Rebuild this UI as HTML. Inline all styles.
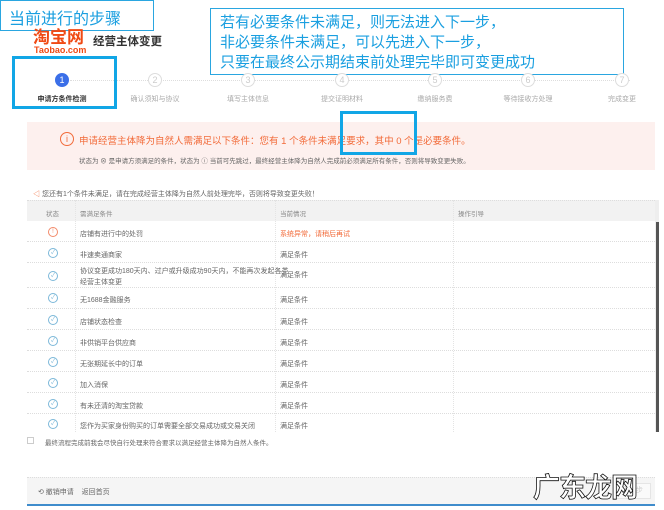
<!DOCTYPE html>
<html><head><meta charset="utf-8"><style>
*{margin:0;padding:0;box-sizing:border-box}
body{width:664px;height:510px;background:#fff;position:relative;overflow:hidden;font-family:"Liberation Sans","Noto Sans CJK SC",sans-serif;color:#555}
.a{position:absolute;white-space:nowrap}
.box{position:absolute;border:3px solid #11a6e6}
.tbox{position:absolute;border:1px solid #2aa6e0;background:#fff}
.c{position:absolute;width:14px;height:14px;border-radius:50%;border:1px solid #ddd;font-size:9px;color:#ccc;text-align:center;line-height:12px}
.lbl{position:absolute;font-size:7px;color:#aaa;top:94px;transform:translateX(-50%)}
.row{position:absolute;left:27px;width:628px;border-bottom:1px dotted #ddd;font-size:7px;color:#666}
.row span{position:absolute}
.ok{position:absolute;left:21px;width:10px;height:10px;border:1px solid #7cb8d9;border-radius:50%;font-size:6px;color:#7cb8d9;text-align:center;line-height:8px}
.vl{position:absolute;top:200px;height:232px;border-left:1px dotted #e4e4e4}
</style></head><body>
<div class="tbox" style="left:0;top:0;width:154px;height:31px"></div>
<div class="a" style="left:9px;top:5px;font-size:16px;color:#1a9fe0">当前进行的步骤</div>
<div class="a" style="left:33px;top:29px;font-size:17px;line-height:18px;font-weight:bold;color:#f04a14;letter-spacing:0">淘宝网</div>
<div class="a" style="left:34px;top:46px;font-size:9px;line-height:9px;font-weight:bold;color:#f04a14">Taobao.com</div>
<div class="a" style="left:93px;top:33px;font-size:11.5px;font-weight:bold;color:#333">经营主体变更</div>
<div class="tbox" style="left:210px;top:8px;width:414px;height:67px"></div>
<div class="a" style="left:220px;top:13px;font-size:15px;line-height:20px;color:#1a9fe0">若有必要条件未满足，则无法进入下一步，<br>非必要条件未满足，可以先进入下一步，<br>只要在最终公示期结束前处理完毕即可变更成功</div>
<div class="a" style="left:70px;top:80px;width:560px;border-top:1px dotted #ddd"></div>
<div class="c" style="left:55px;top:73px;background:#3b6fe8;border-color:#3b6fe8;color:#fff">1</div>
<div class="c" style="left:148px;top:73px;background:#fff">2</div>
<div class="c" style="left:241px;top:73px;background:#fff">3</div>
<div class="c" style="left:335px;top:73px;background:#fff">4</div>
<div class="c" style="left:428px;top:73px;background:#fff">5</div>
<div class="c" style="left:521px;top:73px;background:#fff">6</div>
<div class="c" style="left:615px;top:73px;background:#fff">7</div>
<div class="lbl" style="left:62px;color:#333;font-weight:bold">申请方条件检测</div>
<div class="lbl" style="left:155px">确认须知与协议</div>
<div class="lbl" style="left:248px">填写主体信息</div>
<div class="lbl" style="left:342px">提交证明材料</div>
<div class="lbl" style="left:435px">缴纳服务费</div>
<div class="lbl" style="left:528px">等待接收方处理</div>
<div class="lbl" style="left:622px">完成变更</div>
<div class="box" style="left:12px;top:56px;width:105px;height:53px"></div>
<div class="a" style="left:27px;top:122px;width:628px;height:48px;background:#fdf0ee"></div>
<div class="a" style="left:60px;top:132px;width:14px;height:14px;border:1px solid #f26b3a;border-radius:50%;color:#f26b3a;font-size:9px;text-align:center;line-height:12px">i</div>
<div class="a" style="left:79px;top:133px;font-size:9.5px;color:#f26b3a">申请经营主体降为自然人需满足以下条件：您有 1 个条件未满足要求，其中 0 个是必要条件。</div>
<div class="a" style="left:79px;top:155px;font-size:6.5px;color:#666">状态为 ⊗ 是申请方须满足的条件，状态为 ⓘ 当前可先跳过，最终经营主体降为自然人完成前必须满足所有条件，否则将导致变更失败。</div>
<div class="box" style="left:340px;top:111px;width:77px;height:44px"></div>
<div class="a" style="left:33px;top:189px;font-size:7px;color:#666"><span style="color:#f26b3a">◁</span> 您还有1个条件未满足，请在完成经营主体降为自然人前处理完毕，否则将导致变更失败！</div>
<div class="a" style="left:27px;top:200px;width:628px;height:21px;background:#f2f2f2;border-top:1px dotted #ddd"></div>
<div class="a" style="left:46px;top:208px;font-size:6.5px;color:#888">状态</div>
<div class="a" style="left:80px;top:208px;font-size:6.5px;color:#888">需满足条件</div>
<div class="a" style="left:280px;top:208px;font-size:6.5px;color:#888">当前情况</div>
<div class="a" style="left:458px;top:208px;font-size:6.5px;color:#888">操作引导</div>
<div class="vl" style="left:75px"></div><div class="vl" style="left:275px"></div><div class="vl" style="left:453px"></div>
<div class="row" style="top:221px;height:21px"><div class="ok" style="top:6px;border-color:#f28a6a;color:#f28a6a">!</div><span style="left:53px;top:8px">店铺有进行中的处罚</span><span style="left:253px;top:8px;color:#f26b3a">系统异常，请稍后再试</span></div>
<div class="row" style="top:242px;height:21px"><div class="ok" style="top:6px">✓</div><span style="left:53px;top:8px">非速卖通商家</span><span style="left:253px;top:8px">满足条件</span></div>
<div class="row" style="top:263px;height:25px;line-height:11px"><div class="ok" style="top:8px">✓</div><span style="left:53px;top:3px">协议变更成功180天内、过户或升级成功90天内，不能再次发起各类<br>经营主体变更</span><span style="left:253px;top:7px">满足条件</span></div>
<div class="row" style="top:288px;height:21px"><div class="ok" style="top:5px">✓</div><span style="left:53px;top:7px">无1688金融服务</span><span style="left:253px;top:7px">满足条件</span></div>
<div class="row" style="top:309px;height:21px"><div class="ok" style="top:6px">✓</div><span style="left:53px;top:8px">店铺状态检查</span><span style="left:253px;top:8px">满足条件</span></div>
<div class="row" style="top:330px;height:21px"><div class="ok" style="top:6px">✓</div><span style="left:53px;top:8px">非供销平台供应商</span><span style="left:253px;top:8px">满足条件</span></div>
<div class="row" style="top:351px;height:21px"><div class="ok" style="top:6px">✓</div><span style="left:53px;top:8px">无张期延长中的订单</span><span style="left:253px;top:8px">满足条件</span></div>
<div class="row" style="top:372px;height:21px"><div class="ok" style="top:6px">✓</div><span style="left:53px;top:8px">加入消保</span><span style="left:253px;top:8px">满足条件</span></div>
<div class="row" style="top:393px;height:21px"><div class="ok" style="top:6px">✓</div><span style="left:53px;top:8px">有未还清的淘宝贷款</span><span style="left:253px;top:8px">满足条件</span></div>
<div class="row" style="top:414px;height:18px;border:none"><div class="ok" style="top:5px">✓</div><span style="left:53px;top:7px">您作为买家身份购买的订单需要全部交易成功或交易关闭</span><span style="left:253px;top:7px">满足条件</span></div>
<div class="a" style="left:655px;top:200px;width:4px;height:232px;background:#eee"></div>
<div class="a" style="left:656px;top:222px;width:3px;height:210px;background:#555"></div>
<div class="a" style="left:27px;top:437px;width:7px;height:7px;border:1px solid #ccc"></div>
<div class="a" style="left:45px;top:437px;font-size:6.5px;color:#666">最终流程完成前我会尽快自行处理来符合要求以满足经营主体降为自然人条件。</div>
<div class="a" style="left:27px;top:477px;width:628px;height:29px;background:#f5f5f5;border-top:1px dotted #ddd;border-bottom:2px solid #3f8ccc"></div>
<div class="a" style="left:38px;top:487px;font-size:7px;color:#666">⟲ 撤销申请 &nbsp;&nbsp; 返回首页</div>
<div class="a" style="left:614px;top:483px;width:37px;height:16px;border:1px solid #e5e5e5;background:#fafafa;font-size:7px;color:#ccc;text-align:center;line-height:14px">下一步</div>
<div class="a" style="left:533px;top:466px;font-size:27px;color:#fff;font-weight:bold;-webkit-text-stroke:0.8px #111;letter-spacing:-1px">广东龙网</div>
</body></html>
